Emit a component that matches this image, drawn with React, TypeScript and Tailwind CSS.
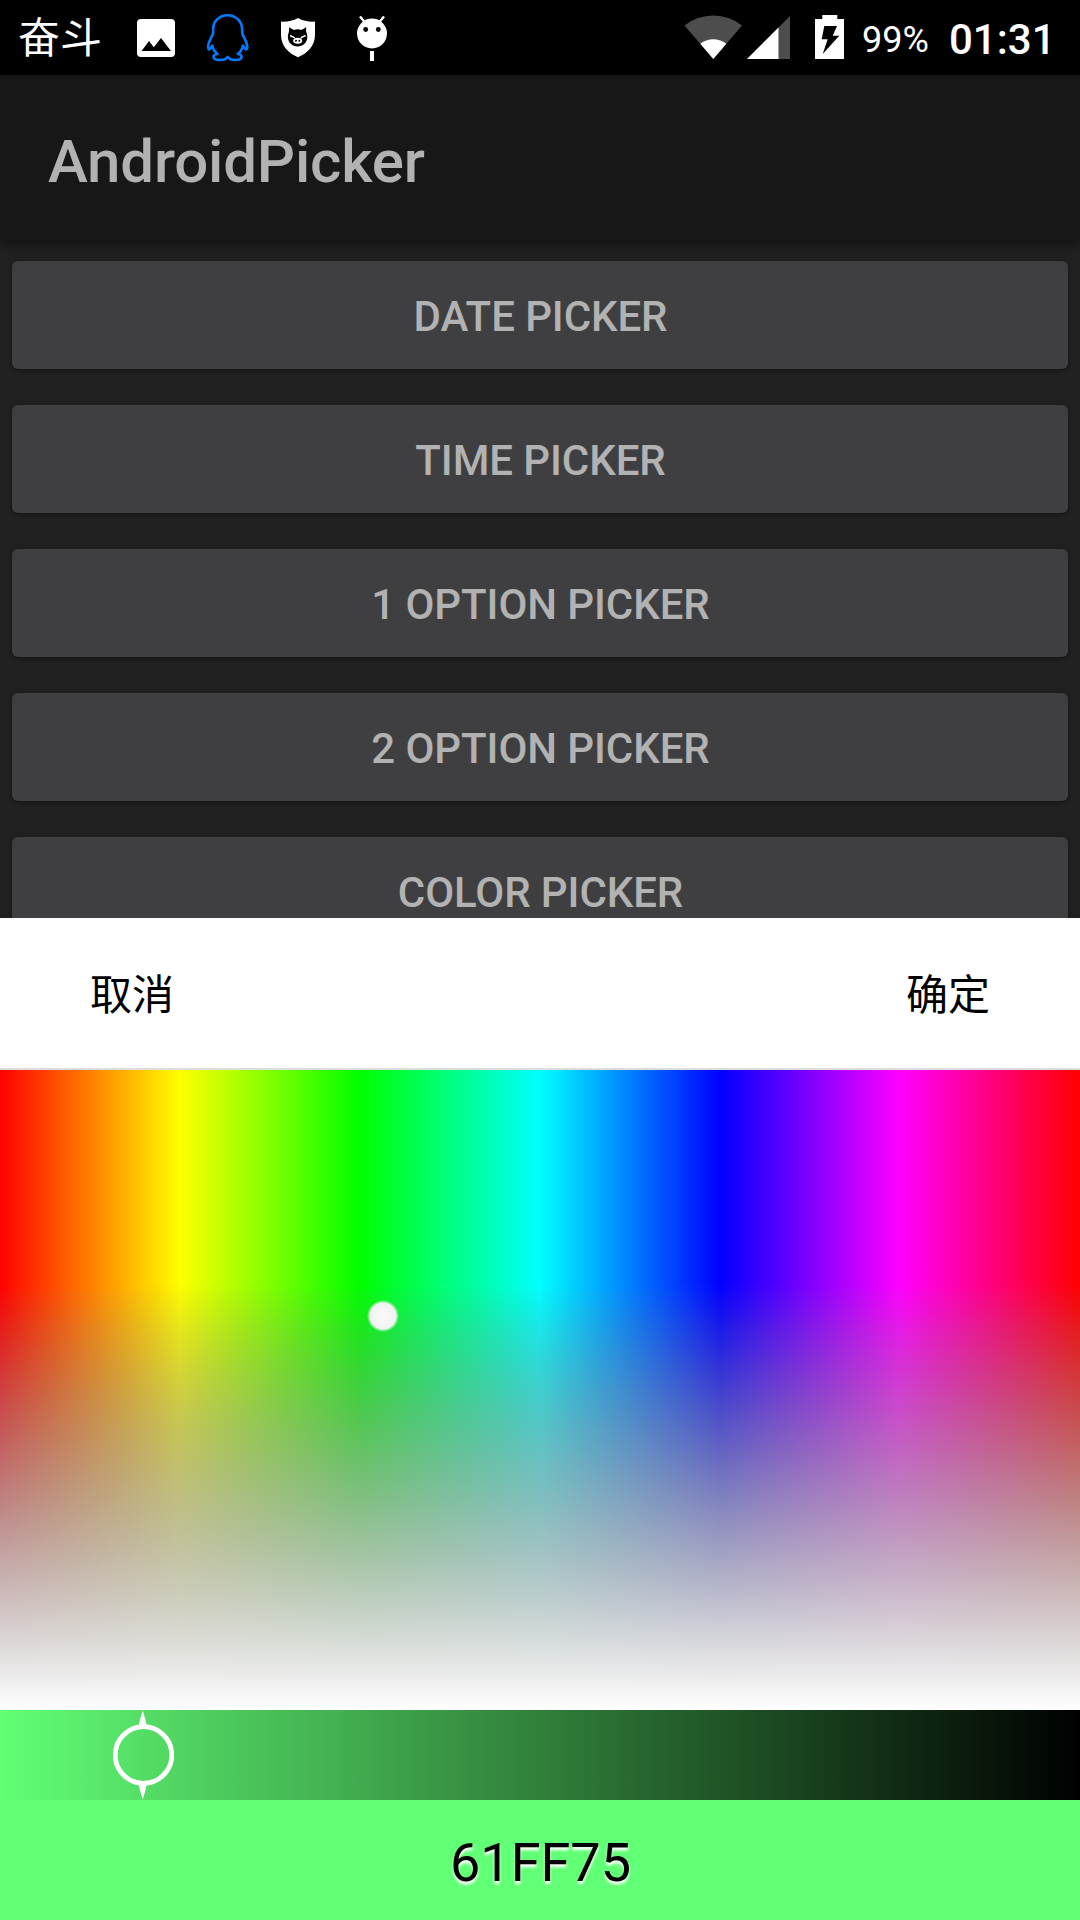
const PICKERS = ["DATE PICKER", "TIME PICKER", "1 OPTION PICKER", "2 OPTION PICKER", "COLOR PICKER"];

// Fade to white over the lower two thirds of the hue panel.
// Painted colour at fade position t is hue * (1 - t)^2 + white * t.
const STEPS = 24;
const fade = `linear-gradient(to bottom, ${Array.from({ length: STEPS + 1 }, (_, i) => {
  const t = i / STEPS;
  const g = 255 / (2 - t);
  const a = 2 * t - t * t;
  const pos = 33.333 + t * 66.667;
  return `rgba(${g.toFixed(2)}, ${g.toFixed(2)}, ${g.toFixed(2)}, ${a.toFixed(4)}) ${pos.toFixed(3)}%`;
}).join(", ")})`;

function NotificationIcons() {
  return (
    <svg className="h-[75px] w-[252px] shrink-0" viewBox="135 0 252 75" aria-hidden="true">
      {/* picture */}
      <rect x="137" y="19" width="38" height="38" rx="4" fill="#fff" />
      <path d="M141.5 51 149 41l4.8 6.3L161 38l10 13z" fill="#000" />
      {/* penguin */}
      <path
        d="M227.3 15.2c-8 0-14 6-14.2 13.8-.1 2 .2 3.6-.2 4.800-1.300 4.200-4.600 7.400-4.800 12.200 0 2 .4 3.400 1 3.400 1.200 0 2.200-2.600 3.200-3.800.6 3.400 2.400 6.300 5.200 8.400-2.600.4-4 1.400-4 2.800 0 2 3 3.200 7 3.200 3.400 0 5.800-1.200 7.200-3 1.400 1.800 3.800 3 7.200 3 4 0 6.700-1.200 6.700-3.200 0-1.400-1.200-2.400-3.700-2.800 2.800-2.100 4.500-5 5.100-8.400 1 1.200 2 3.800 3.200 3.800.6 0 1-1.400 1-3.400-.2-4.800-3.500-8-4.800-12.200-.4-1.200-.2-2.800-.3-4.800-.2-7.800-6.600-13.800-14.600-13.800z"
        fill="none"
        stroke="#007bff"
        strokeWidth="2.600"
        strokeLinejoin="round"
      />
      {/* shield */}
      <path d="M298 18c5 3 10.500 3.800 17 3.600v13.400c0 10.500-7.500 18.500-17 22.200-9.500-3.700-17-11.700-17-22.200V21.600c6.500.2 12-.6 17-3.600z" fill="#fff" />
      <path d="M289 27.300l5 2.700c1.300-.5 2.400-.7 3.500-.7s2.500.2 3.700.7l5-2.700c-.3 3 0 4.500.4 5.800.5 1.600.7 2.700.7 4 0 5.400-4.300 9.500-9.700 9.500s-9.700-4.100-9.700-9.500c0-1.300.2-2.400.7-4 .4-1.300.7-2.800.4-5.800z" fill="#000" />
      <path d="M290 35.500l4.800 2.300M305.500 35.500l-4.800 2.300" stroke="#fff" strokeWidth="1.400" />
      <ellipse cx="297.700" cy="40.700" rx="4.500" ry="3" fill="#fff" />
      <circle cx="296" cy="40.800" r="1" fill="#000" />
      <circle cx="299.400" cy="40.800" r="1" fill="#000" />
      {/* debug robot */}
      <circle cx="372" cy="33.500" r="15" fill="#fff" />
      <path d="M360 16.500l5 6M384 16.500l-5 6" stroke="#fff" strokeWidth="2.400" />
      <circle cx="365.700" cy="29.500" r="2.400" fill="#000" />
      <circle cx="378.300" cy="29.500" r="2.400" fill="#000" />
      <rect x="370" y="51" width="4" height="10" fill="#fff" />
    </svg>
  );
}

function SystemIcons() {
  return (
    <svg className="h-[75px] w-[164px] shrink-0" viewBox="682 0 164 75" aria-hidden="true">
      <path d="M713.300 59 684.500 25.500a46 46 0 0 1 57.500 0z" fill="#4d4d4d" />
      <path d="M713.300 59 700.300 43.800a21 21 0 0 1 26 0z" fill="#fff" />
      <path d="M747 59 790 16v43z" fill="#4d4d4d" />
      <path d="M747 59 778.500 27.500V59z" fill="#fff" />
      <path d="M822.300 15h15v4H844v40h-29V19h7.300z" fill="#fff" />
      <path d="M824.300 26H837l-4.300 9.700h6.600L822.700 54l5-14.700h-6z" fill="#000" />
    </svg>
  );
}

export default function App() {
  return (
    <div className="flex h-[1920px] w-[1080px] flex-col overflow-hidden bg-[#212121] font-[Roboto,'Noto_Sans_CJK_SC',sans-serif]">
      <header className="flex h-[75px] shrink-0 items-center bg-black text-white">
        <span className="ml-[18px] w-[117px] pt-[2px] text-[42px] leading-none">奋斗</span>
        <NotificationIcons />
        <span className="flex-1" />
        <SystemIcons />
        <span className="ml-[16px] w-[71px] pt-[4px] text-[36px] leading-none">99%</span>
        <span className="w-[147px] pl-[16px] pt-[5px] text-[42px] font-medium leading-none">01:31</span>
      </header>

      <div className="z-10 flex h-[168px] shrink-0 items-center bg-[#171717] pl-[48px] shadow-[0_4px_10px_rgba(0,0,0,0.3)]">
        <h1 className="pt-[6px] text-[60px] font-medium leading-none tracking-[-0.18px] text-[#b2b2b2]">AndroidPicker</h1>
      </div>

      <main className="flex h-[675px] shrink-0 flex-col gap-[36px] overflow-hidden px-[12px] pt-[18px]">
        {PICKERS.map((label) => (
          <button
            key={label}
            className="h-[108px] w-full shrink-0 rounded-[6px] bg-[#3f3f41] pl-px pt-[3px] text-[42px] font-medium leading-none tracking-[-0.08px] text-[#b2b2b2] shadow-[0_2px_5px_rgba(0,0,0,0.4)]"
          >
            {label}
          </button>
        ))}
      </main>

      <section className="flex h-[1002px] shrink-0 flex-col bg-white">
        <div className="flex h-[152px] items-center justify-between border-b-2 border-[#dddddd] px-[90px] pt-[5px] text-[42px] leading-none text-black">
          <button>取消</button>
          <button>确定</button>
        </div>
        <div className="relative h-[640px] bg-[linear-gradient(to_right,#f00,#ff0,#0f0,#0ff,#00f,#f0f,#f00)]">
          <div className="h-full w-full" style={{ backgroundImage: fade }} />
          <span className="absolute left-[367px] top-[230px] size-[32px] rounded-full bg-[radial-gradient(circle_closest-side,#fafafa_0%,#f2f2f2_80%,rgba(242,242,242,0)_100%)]" />
        </div>
        <div className="relative h-[90px] bg-[linear-gradient(to_right,#61ff75,#000)]">
          <svg className="absolute left-[113px] top-0 h-[90px] w-[61px]" viewBox="0 0 61 90" aria-hidden="true">
            <circle cx="30.500" cy="45" r="28.300" fill="none" stroke="#fff" strokeWidth="4.800" />
            <path d="M29.700.5Q32.500 8 34.200 18h-9Q27 8 29.700.5zM29.700 89.500Q32.500 82 34.200 72h-9Q27 82 29.700 89.500z" fill="#fff" />
          </svg>
        </div>
        <div className="flex h-[120px] items-center justify-center bg-[#61ff75] pl-px pt-[6px] text-[54px] leading-none text-black [text-shadow:0_3px_3px_#fff]">
          61FF75
        </div>
      </section>
    </div>
  );
}
